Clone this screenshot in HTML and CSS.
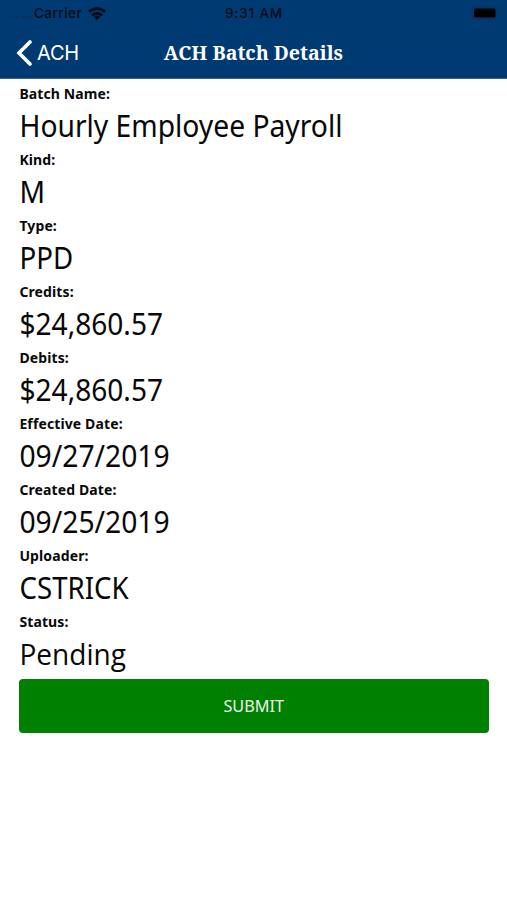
FILE: index.html
```html
<!DOCTYPE html>
<html lang="en">
<head>
<meta charset="utf-8">
<meta name="viewport" content="width=device-width, initial-scale=1">
<title>ACH Batch Details</title>
<link rel="stylesheet" href="styles.css">
</head>
<body>
<header class="header">
  <div class="status">
    <div class="carrier">
      <span class="signal"><i></i><i></i><i></i><i></i></span>
      <span class="name">Carrier</span>
      <svg class="wifi" viewBox="0 0 18 13" width="18" height="13"><g fill="none" stroke="#050b14" stroke-width="2.800"><path d="M1 4.800a11.600 11.600 0 0 1 16 0"/><path d="M4 8.400a7.300 7.300 0 0 1 10 0"/></g><path d="M9 13 5.900 10a4.500 4.500 0 0 1 6.200 0Z" fill="#050b14"/></svg>
    </div>
    <span class="time">9:31 AM</span>
    <svg class="battery" viewBox="0 0 30 14" width="30" height="14"><rect x="1" y="1" width="25" height="12" rx="3" fill="none" stroke="#053263"/><rect x="3" y="2.500" width="21.500" height="9" rx="1.500" fill="#000"/><path d="M27.500 5v4q1.500-.5 1.500-2t-1.500-2" fill="#053263"/></svg>
  </div>
  <nav class="nav">
    <a class="back"><svg viewBox="0 0 16 26" width="16" height="26"><path d="M14 2 3 13l11 11" fill="none" stroke="#fff" stroke-width="3.600" stroke-linecap="round"/></svg><span>ACH</span></a>
    <h1 class="title">ACH Batch Details</h1>
    <span></span>
  </nav>
</header>
<main class="content">
  <dl class="fields">
    <div class="field"><dt>Batch Name:</dt><dd>Hourly Employee Payroll</dd></div>
    <div class="field"><dt>Kind:</dt><dd>M</dd></div>
    <div class="field"><dt>Type:</dt><dd class="code">PPD</dd></div>
    <div class="field"><dt>Credits:</dt><dd class="amount">$24,860.57</dd></div>
    <div class="field"><dt>Debits:</dt><dd class="amount">$24,860.57</dd></div>
    <div class="field"><dt>Effective Date:</dt><dd>09/27/2019</dd></div>
    <div class="field"><dt>Created Date:</dt><dd>09/25/2019</dd></div>
    <div class="field"><dt>Uploader:</dt><dd class="code">CSTRICK</dd></div>
    <div class="field"><dt>Status:</dt><dd class="state">Pending</dd></div>
  </dl>
  <button class="submit" type="button"><span>SUBMIT</span></button>
</main>
</body>
</html>
```
FILE: styles.css
```css
* { box-sizing: border-box; }
body { margin: 0; background: #fff; color: #080808; font-family: "Noto Sans", sans-serif; }
.header { height: 79px; background: #003a72; border-bottom: 1px solid #346796; }
.status { height: 26px; display: grid; grid-template-columns: 1fr auto 1fr; align-items: center; padding: 0 6px 0 7px; font: 500 13.500px/26px Inter, sans-serif; color: #050b14; }
.carrier { display: flex; align-items: center; }
.name { letter-spacing: .45px; }
.time { letter-spacing: .85px; }
.signal { display: flex; gap: 2px; width: 27px; padding: 8px 0 0 2px; }
.signal i { width: 4px; height: 2px; border-radius: 1px; background: #0b3157; }
.wifi { margin-left: 6px; }
.battery { justify-self: end; }
.nav { height: 53px; display: grid; grid-template-columns: 1fr auto 1fr; align-items: center; color: #fff; }
.back { display: flex; align-items: center; gap: 5px; padding-left: 16px; font-size: 20px; letter-spacing: -.2px; font-family: Inter, sans-serif; }
.title { margin: 0; padding-top: 1px; font: 700 20px/28px "Noto Serif", "Droid Serif", "DejaVu Serif", serif; transform: scaleX(.98); }
.content { padding: 0 18px 0 19px; }
.fields { margin: 0; }
.field { height: 66px; padding-top: 5px; }
dt { font-size: 14px; line-height: 20px; font-weight: 700; letter-spacing: .12px; padding-left: .4px; }
dd { margin: 0; font-size: 30px; line-height: 43px; white-space: nowrap; transform: scaleX(.941); transform-origin: 0 50%; padding-left: .5px; }
.amount { transform: scaleX(.936); }
.code { transform: scaleX(.922); }
.state { font-family: "Open Sans", "Noto Sans", sans-serif; transform: scaleX(.935); }
.submit { display: block; width: 100%; height: 54px; margin-top: 6px; padding: 0; border: 0; border-radius: 4px; background: #008000; color: #e8f5e8; font: 17px/54px "Noto Sans", sans-serif; }
.submit span { display: inline-block; transform: translateY(-.5px) scaleX(.955); }
```
